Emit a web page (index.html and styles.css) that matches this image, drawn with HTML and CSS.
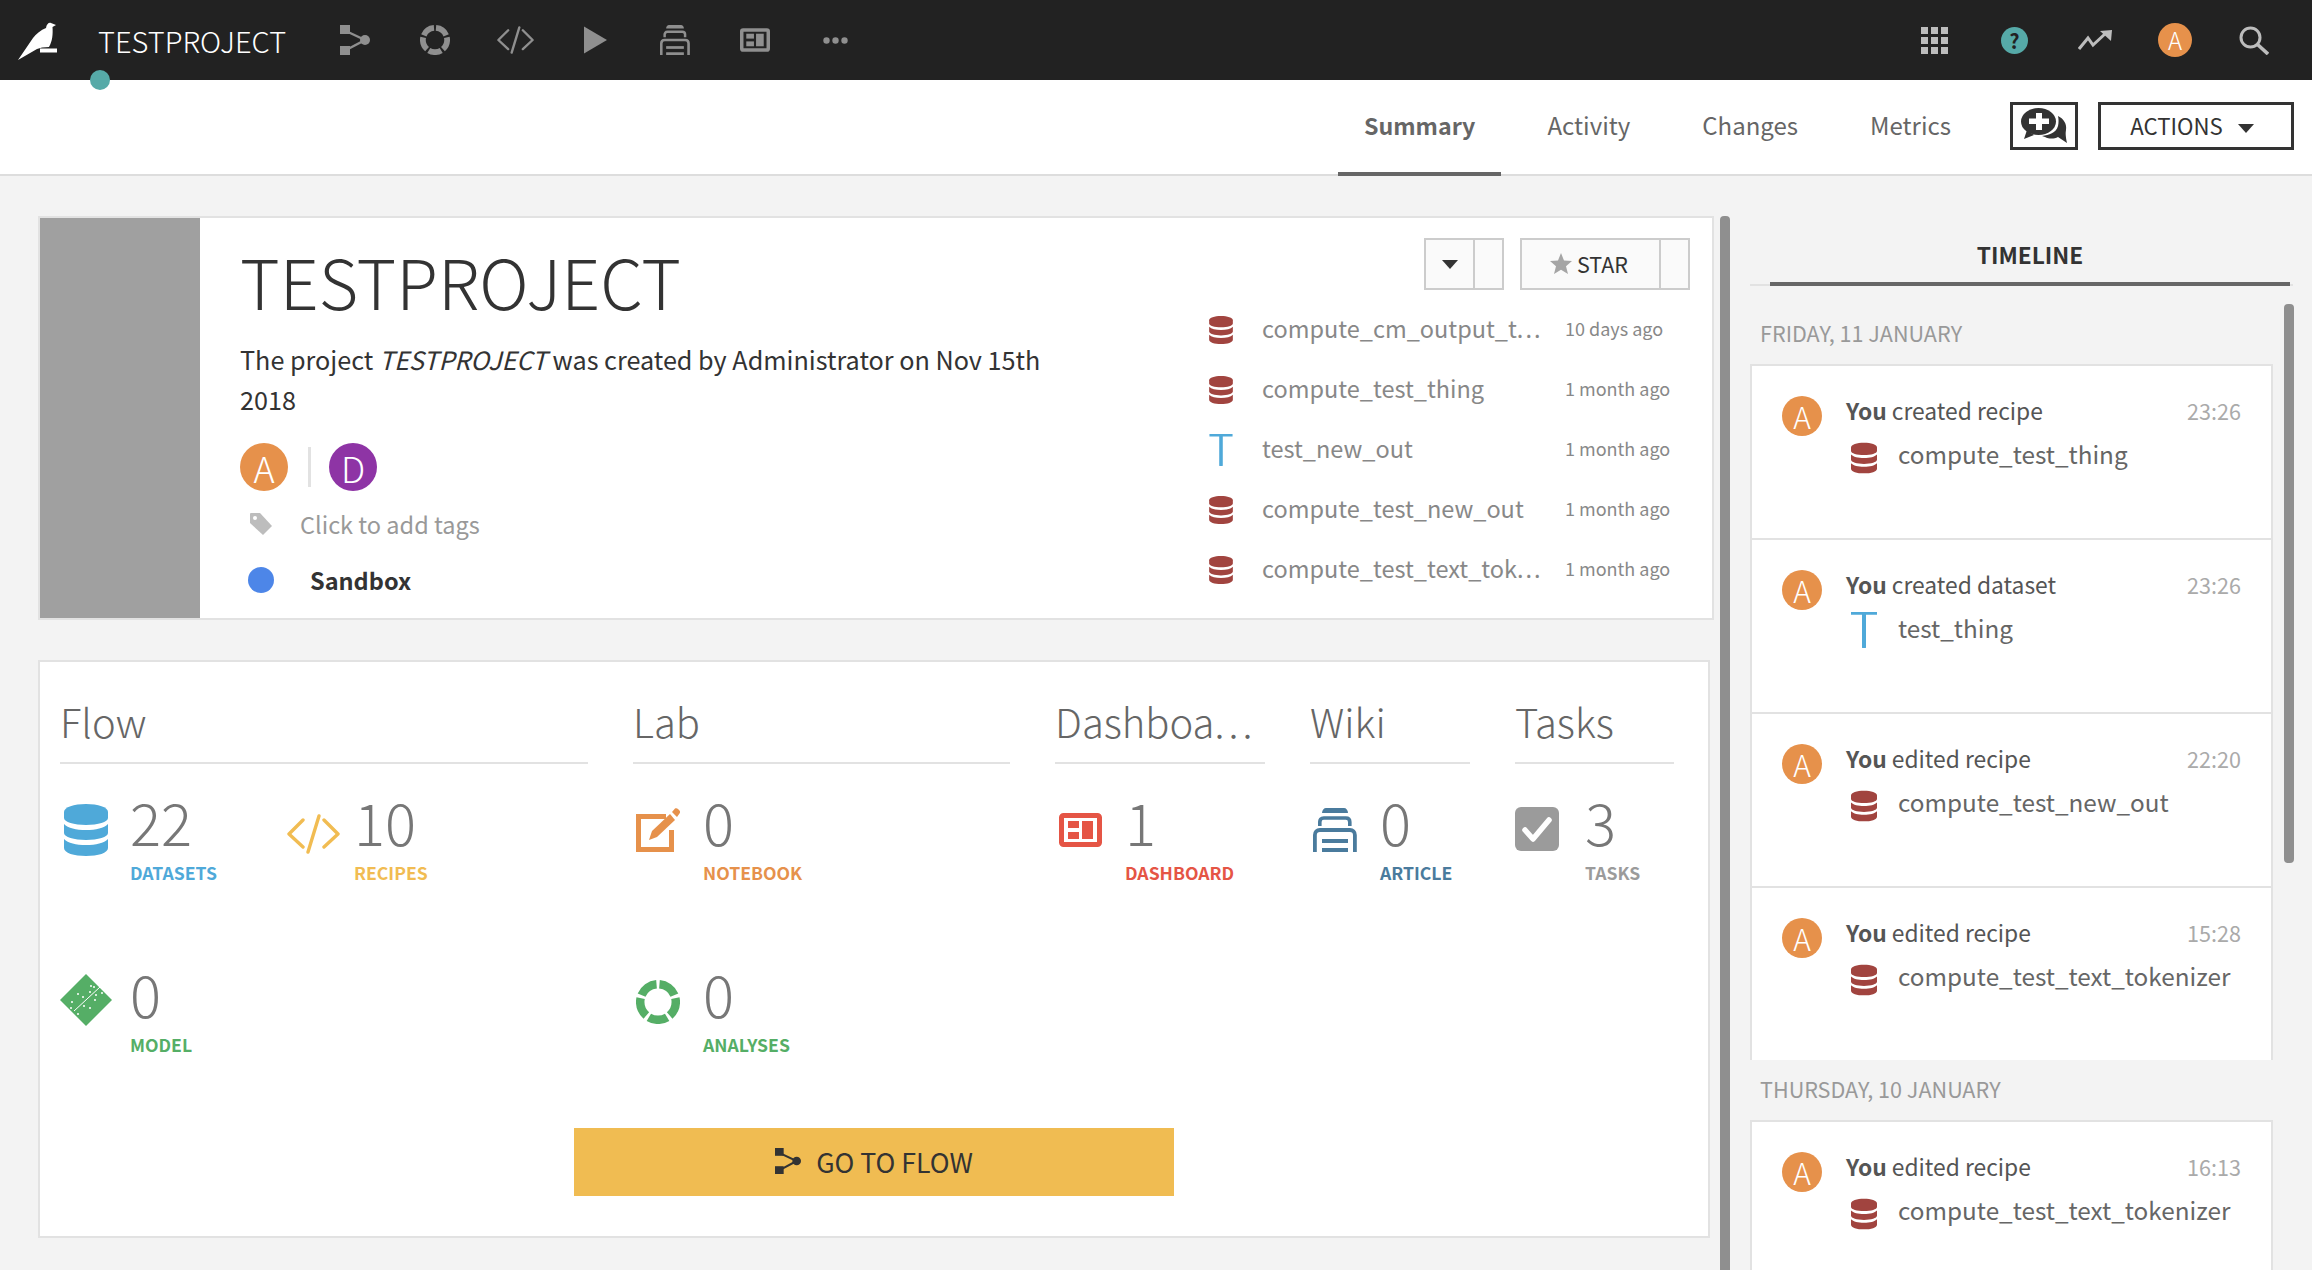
FILE: index.html
```html
<!DOCTYPE html>
<html lang="en">
<head>
    <meta charset="UTF-8">
    <title>TESTPROJECT</title>
    <link rel="stylesheet" href="styles.css">
</head>
<body>
    <svg class="defs" width="0" height="0">
        <symbol id="i-db" viewBox="0 0 44 52">
            <path fill="currentColor" d="M0 8C0 3 10 0 22 0s22 3 22 8v6c0 4-10 7-22 7S0 18 0 14z"/>
            <path fill="currentColor" d="M0 20c4 4 12 6 22 6s18-2 22-6v9c0 4-10 7-22 7S0 33 0 29z"/>
            <path fill="currentColor" d="M0 35c4 4 12 6 22 6s18-2 22-6v9c0 5-10 8-22 8S0 49 0 44z"/>
        </symbol>
        <symbol id="i-t" viewBox="0 0 26 36">
            <path fill="currentColor" d="M0 0h26v2.800H15V35a2 2 0 0 1-4 0V2.800H0z"/>
        </symbol>
        <symbol id="i-flow" viewBox="0 0 30 30">
            <path fill="none" stroke="currentColor" stroke-width="2.4" d="M8 7l17 8L8 24"/>
            <rect fill="currentColor" width="10" height="9"/>
            <rect fill="currentColor" y="21" width="10" height="9"/>
            <circle fill="currentColor" cx="25" cy="15" r="5"/>
        </symbol>
        <symbol id="i-ring" viewBox="0 0 44 44">
            <circle fill="none" stroke="currentColor" stroke-width="8.5" stroke-dasharray="22.5 3.6" stroke-dashoffset="-1.8" transform="rotate(-90 22 22)" cx="22" cy="22" r="17.8" pathLength="130.5"/>
        </symbol>
        <symbol id="i-code" viewBox="0 0 53 40">
            <path fill="none" stroke="currentColor" stroke-width="3.4" stroke-linecap="round" stroke-linejoin="round" d="M16 6L2 20l14 13M37 6l14 14-14 13M32 2L21 38"/>
        </symbol>
        <symbol id="i-wiki" viewBox="0 0 44 44">
            <path fill="currentColor" d="M9 5c0-3 2-5 4-5h18c2 0 4 2 4 5z"/>
            <path fill="none" stroke="currentColor" stroke-width="3.6" d="M6.800 18v-4c0-2 1-4 4-4h22c3 0 4 2 4 4v4"/>
            <path fill="none" stroke="currentColor" stroke-width="3.8" d="M1.900 44V27c0-3 2-5 5-5h30c3 0 5 2 5 5v17"/>
            <rect fill="currentColor" x="9" y="31" width="26" height="4"/>
            <rect fill="currentColor" x="9" y="40" width="26" height="4"/>
        </symbol>
        <symbol id="i-dash" viewBox="0 0 43 34">
            <rect fill="none" stroke="currentColor" stroke-width="5" x="2.500" y="2.500" width="38" height="29" rx="2"/>
            <rect fill="currentColor" x="9" y="8" width="11" height="7"/>
            <rect fill="currentColor" x="9" y="19" width="11" height="7"/>
            <rect fill="currentColor" x="23" y="8" width="11" height="18"/>
        </symbol>
    </svg>

    <header class="topbar">
        <svg class="logo" viewBox="0 0 40 38"><path fill="#fff" d="M0 38L15 16C18 12 23 8 28 6 28.500 2 31 0 33 1L38 3 34.500 5C35 12 34.500 19 31 25L24 25.500 19 27z"/><rect fill="#fff" x="22" y="26.500" width="17" height="4"/></svg>
        <span class="project-name">TESTPROJECT</span>
        <nav class="appnav">
            <svg class="nav-icon wide30"><use href="#i-flow"/></svg>
            <svg class="nav-icon wide30"><use href="#i-ring"/></svg>
            <svg class="nav-icon wide37"><use href="#i-code"/></svg>
            <svg class="nav-icon wide23" viewBox="0 0 23 27"><path fill="currentColor" d="M0 0l23 13.500L0 27z"/></svg>
            <svg class="nav-icon wide30"><use href="#i-wiki"/></svg>
            <svg class="nav-icon wide30"><use href="#i-dash"/></svg>
            <svg class="nav-icon wide25" viewBox="0 0 25 7"><circle fill="currentColor" cx="3.500" cy="3.500" r="3.200"/><circle fill="currentColor" cx="12.500" cy="3.500" r="3.200"/><circle fill="currentColor" cx="21.500" cy="3.500" r="3.200"/></svg>
        </nav>
        <div class="topright">
            <svg class="apps" viewBox="0 0 27 27">
                <g fill="#bdbdbd">
                    <rect width="7" height="7"/><rect x="10" width="7" height="7"/><rect x="20" width="7" height="7"/>
                    <rect y="10" width="7" height="7"/><rect x="10" y="10" width="7" height="7"/><rect x="20" y="10" width="7" height="7"/>
                    <rect y="20" width="7" height="7"/><rect x="10" y="20" width="7" height="7"/><rect x="20" y="20" width="7" height="7"/>
                </g>
            </svg>
            <span class="help">?</span>
            <svg class="trend" viewBox="0 0 34 20"><path fill="none" stroke="#bdbdbd" stroke-width="3" d="M1 19l9-11 5 7 13-12"/><path fill="#bdbdbd" d="M22 1l12-1-1 11z"/></svg>
            <span class="avatar avatar-top">A</span>
            <svg class="search" viewBox="0 0 30 29"><circle fill="none" stroke="#bdbdbd" stroke-width="3" cx="11.500" cy="11.500" r="9.500"/><path stroke="#bdbdbd" stroke-width="3.600" d="M18 18l11 10"/></svg>
        </div>
        <span class="status-dot"></span>
    </header>

    <div class="subnav">
        <a class="tab active">Summary</a>
        <a class="tab">Activity</a>
        <a class="tab">Changes</a>
        <a class="tab">Metrics</a>
        <button class="btn-discuss">
            <svg viewBox="0 0 46 36"><path fill="#333" d="M37 8c6 3 9 8 8 14-.5 3-.5 6 1 13l-9-6c-4 2-9 2-13 0l-3-1c7-1 14-3 16-10 .8-3 .7-7 0-10z"/><ellipse fill="#333" cx="17.500" cy="13.500" rx="17.500" ry="13.500"/><path fill="#333" d="M6 22l7 5-10 4z"/><path fill="#fff" d="M15 5h6v5.500h7V16h-7v6h-6v-6H8v-5.500h7z"/></svg>
        </button>
        <button class="btn-actions">ACTIONS <span class="caret"></span></button>
    </div>

    <main class="page">
        <div class="left">
            <section class="project-card">
                <div class="project-thumb"></div>
                <div class="project-info">
                    <h1>TESTPROJECT</h1>
                    <p class="desc">The project <em>TESTPROJECT</em> was created by Administrator on Nov 15th 2018</p>
                    <div class="people">
                        <span class="avatar avatar-big">A</span>
                        <span class="sep"></span>
                        <span class="avatar avatar-big purple">D</span>
                    </div>
                    <div class="tags">
                        <svg class="tag-icon" viewBox="0 0 22 22"><path fill="#bdbdbd" d="M1 0h9l12 13-9 9L0 10V1a1 1 0 0 1 1-1z"/><circle fill="#fff" cx="5" cy="5" r="2"/></svg>
                        <span>Click to add tags</span>
                    </div>
                    <div class="status-row">
                        <span class="blue-dot"></span>
                        <strong>Sandbox</strong>
                    </div>
                </div>
                <div class="project-side">
                    <div class="project-btns">
                        <div class="btn-group">
                            <span class="cell cell-caret"><span class="caret"></span></span>
                            <span class="cell cell-end"></span>
                        </div>
                        <div class="btn-group">
                            <span class="cell cell-star">
                                <svg viewBox="0 0 22 21"><path fill="#a5a5a5" d="M11 0l3 7.500 8 .5-6 5.200 2 7.800-7-4.300L4 21l2-7.800L0 8l8-.5z"/></svg>
                                STAR
                            </span>
                            <span class="cell cell-end2"></span>
                        </div>
                    </div>
                    <ul class="recent">
                        <li><svg class="obj red"><use href="#i-db"/></svg><span class="obj-name">compute_cm_output_t<span class="dots">...</span></span><span class="ago">10 days ago</span></li>
                        <li><svg class="obj red"><use href="#i-db"/></svg><span class="obj-name">compute_test_thing</span><span class="ago">1 month ago</span></li>
                        <li><svg class="obj blue t-icon"><use href="#i-t"/></svg><span class="obj-name">test_new_out</span><span class="ago">1 month ago</span></li>
                        <li><svg class="obj red"><use href="#i-db"/></svg><span class="obj-name">compute_test_new_out</span><span class="ago">1 month ago</span></li>
                        <li><svg class="obj red"><use href="#i-db"/></svg><span class="obj-name">compute_test_text_tok<span class="dots">...</span></span><span class="ago">1 month ago</span></li>
                    </ul>
                </div>
            </section>

            <section class="stats-card">
                <div class="stats-cols">
                    <div class="col col-flow">
                        <h2>Flow</h2>
                        <div class="stat-grid">
                            <div class="stat stat-datasets">
                                <svg class="stat-icon c-blue db-big"><use href="#i-db"/></svg>
                                <div><div class="num">22</div><div class="lbl c-blue">DATASETS</div></div>
                            </div>
                            <div class="stat stat-recipes">
                                <svg class="stat-icon c-yellow code-big"><use href="#i-code"/></svg>
                                <div><div class="num">10</div><div class="lbl c-yellow">RECIPES</div></div>
                            </div>
                            <div class="stat stat-model">
                                <svg class="stat-icon c-green diamond" viewBox="0 0 52 52">
                                    <path fill="currentColor" d="M26 0l26 26-26 26L0 26z"/>
                                    <path stroke="#fff" stroke-width="1" d="M14 37L40 13"/>
                                    <g fill="#fff"><circle cx="31" cy="12" r="1"/><circle cx="34" cy="13" r="1"/><circle cx="18" cy="20" r="1"/><circle cx="23" cy="23" r="1"/><circle cx="30" cy="18" r="1"/><circle cx="36" cy="21" r="1"/><circle cx="12" cy="28" r="1"/><circle cx="11" cy="34" r="1"/><circle cx="24" cy="32" r="1"/><circle cx="30" cy="34" r="1"/><circle cx="35" cy="26" r="1"/><circle cx="18" cy="40" r="1"/><circle cx="42" cy="19" r="1"/></g>
                                </svg>
                                <div><div class="num">0</div><div class="lbl c-green">MODEL</div></div>
                            </div>
                        </div>
                    </div>
                    <div class="col col-lab">
                        <h2>Lab</h2>
                        <div class="stat-grid single">
                            <div class="stat">
                                <svg class="stat-icon c-orange square44" viewBox="0 0 44 44">
                                    <path fill="none" stroke="currentColor" stroke-width="5" d="M30 8.500H2.500v33h33V22"/>
                                    <path fill="currentColor" d="M13 32l3-9 18-17 5 6-18 17z"/>
                                    <path fill="currentColor" d="M36 4l3-3.500c1-.5 2-.5 3 .5l1.500 1.500c.8 1 .8 2 0 3L41 9z"/>
                                </svg>
                                <div><div class="num">0</div><div class="lbl c-orange">NOTEBOOK</div></div>
                            </div>
                            <div class="stat">
                                <svg class="stat-icon c-green square44"><use href="#i-ring"/></svg>
                                <div><div class="num">0</div><div class="lbl c-green">ANALYSES</div></div>
                            </div>
                        </div>
                    </div>
                    <div class="col col-dash">
                        <h2>Dashboa<span class="h2-dots">...</span></h2>
                        <div class="stat">
                            <svg class="stat-icon c-red dash-big"><use href="#i-dash"/></svg>
                            <div><div class="num">1</div><div class="lbl c-red">DASHBOARD</div></div>
                        </div>
                    </div>
                    <div class="col col-wiki">
                        <h2>Wiki</h2>
                        <div class="stat">
                            <svg class="stat-icon c-steel square44"><use href="#i-wiki"/></svg>
                            <div><div class="num">0</div><div class="lbl c-steel">ARTICLE</div></div>
                        </div>
                    </div>
                    <div class="col col-tasks">
                        <h2>Tasks</h2>
                        <div class="stat">
                            <svg class="stat-icon square44 task-icon" viewBox="0 0 44 44"><rect fill="#9b9b9b" width="44" height="44" rx="6"/><path fill="none" stroke="#fff" stroke-width="5.500" stroke-linecap="round" stroke-linejoin="round" d="M10 23l8 9 16-19"/></svg>
                            <div><div class="num">3</div><div class="lbl c-gray">TASKS</div></div>
                        </div>
                    </div>
                </div>
                <a class="go-flow">
                    <svg class="flow-mini"><use href="#i-flow"/></svg>
                    GO TO FLOW
                </a>
            </section>
        </div>

        <div class="split"></div>

        <aside class="timeline">
            <div class="tl-head"><span>TIMELINE</span></div>
            <div class="tl-scroll"></div>
            <div class="tl-day">FRIDAY, 11 JANUARY</div>
            <div class="tl-card">
                <div class="tl-item">
                    <span class="avatar avatar-tl">A</span>
                    <div class="tl-body">
                        <div class="tl-line"><span><b>You</b> created recipe</span><time>23:26</time></div>
                        <div class="tl-obj"><svg class="obj red"><use href="#i-db"/></svg>compute_test_thing</div>
                    </div>
                </div>
                <div class="tl-item">
                    <span class="avatar avatar-tl">A</span>
                    <div class="tl-body">
                        <div class="tl-line"><span><b>You</b> created dataset</span><time>23:26</time></div>
                        <div class="tl-obj"><svg class="obj blue"><use href="#i-t"/></svg>test_thing</div>
                    </div>
                </div>
                <div class="tl-item">
                    <span class="avatar avatar-tl">A</span>
                    <div class="tl-body">
                        <div class="tl-line"><span><b>You</b> edited recipe</span><time>22:20</time></div>
                        <div class="tl-obj"><svg class="obj red"><use href="#i-db"/></svg>compute_test_new_out</div>
                    </div>
                </div>
                <div class="tl-item">
                    <span class="avatar avatar-tl">A</span>
                    <div class="tl-body">
                        <div class="tl-line"><span><b>You</b> edited recipe</span><time>15:28</time></div>
                        <div class="tl-obj"><svg class="obj red"><use href="#i-db"/></svg>compute_test_text_tokenizer</div>
                    </div>
                </div>
            </div>
            <div class="tl-day">THURSDAY, 10 JANUARY</div>
            <div class="tl-card">
                <div class="tl-item">
                    <span class="avatar avatar-tl">A</span>
                    <div class="tl-body">
                        <div class="tl-line"><span><b>You</b> edited recipe</span><time>16:13</time></div>
                        <div class="tl-obj"><svg class="obj red"><use href="#i-db"/></svg>compute_test_text_tokenizer</div>
                    </div>
                </div>
            </div>
        </aside>
    </main>
</body>
</html>
```

FILE: styles.css
```css
* {
    margin: 0;
    padding: 0;
    box-sizing: border-box;
}

html, body {
    height: 1270px;
    overflow: hidden;
}

body {
    font-family: 'Noto Sans CJK SC', 'Open Sans', sans-serif;
    background: #f3f3f3;
    color: #333;
}

.defs {
    position: absolute;
}

.dots {
    letter-spacing: 2px;
}

.h2-dots {
    letter-spacing: 4px;
}

/* top bar */
.topbar {
    position: relative;
    height: 80px;
    background: #222;
    display: flex;
    align-items: center;
}

.logo {
    width: 40px;
    height: 38px;
    margin-left: 18px;
    margin-top: 2px;
}

.project-name {
    margin-left: 40px;
    width: 242px;
    color: #fff;
    font-size: 29px;
    font-weight: 300;
    line-height: 40px;
}

.appnav {
    display: flex;
    align-items: center;
    color: #8f8f8f;
}

.nav-icon { height: 30px; }
.wide30 { width: 30px; margin-right: 50px; }
.wide37 { width: 37px; margin-right: 50px; margin-left: -3px; }
.wide23 { width: 23px; margin-right: 53px; }
.wide25 { width: 25px; height: 7px; margin-left: 3px; }

.topright {
    margin-left: auto;
    display: flex;
    align-items: center;
    padding-right: 43px;
}

.apps { width: 27px; height: 27px; margin-right: 53px; }
.trend { width: 34px; height: 20px; margin: 0 46px 0 50px; }
.search { width: 30px; height: 29px; margin-left: 47px; }

.help {
    width: 27px;
    height: 27px;
    border-radius: 50%;
    background: #56aaa8;
    color: #222;
    font-size: 20px;
    font-weight: 700;
    line-height: 27px;
    text-align: center;
}

.status-dot {
    position: absolute;
    left: 90px;
    top: 70px;
    width: 20px;
    height: 20px;
    border-radius: 50%;
    background: #56aaa8;
}

.avatar {
    display: inline-block;
    flex: none;
    border-radius: 50%;
    background: #e6914b;
    color: #fff;
    text-align: center;
    font-weight: 300;
}

.avatar-top { width: 34px; height: 34px; font-size: 24px; line-height: 34px; }
.avatar-big { width: 48px; height: 48px; font-size: 36px; line-height: 48px; }
.avatar-tl { width: 40px; height: 40px; font-size: 30px; line-height: 40px; }
.purple { background: #8e34a5; }

/* sub navigation */
.subnav {
    height: 96px;
    background: #fff;
    border-bottom: 2px solid #ddd;
    display: flex;
    align-items: flex-start;
}

.tab {
    height: 96px;
    color: #666;
    font-size: 24px;
    line-height: 90px;
    padding: 0 26px;
    margin-right: 20px;
    border-bottom: 4px solid transparent;
}

.tab:first-child { margin-left: auto; }

.tab.active {
    font-size: 23.200px;
    font-weight: 700;
    border-bottom-color: #666;
}

.btn-discuss, .btn-actions {
    height: 48px;
    margin-top: 22px;
    background: #fff;
    border: 3px solid #333;
    font-family: inherit;
    color: #333;
}

.btn-discuss {
    width: 68px;
    margin-left: 13px;
    display: flex;
    align-items: center;
    justify-content: center;
}

.btn-discuss svg { width: 46px; height: 36px; }

.btn-actions {
    width: 196px;
    margin: 22px 18px 0 20px;
    padding: 0 8px 2px 0;
    font-size: 22.200px;
    font-weight: 400;
}

.caret {
    display: inline-block;
    width: 0;
    height: 0;
    margin-left: 10px;
    vertical-align: middle;
    border-left: 8px solid transparent;
    border-right: 8px solid transparent;
    border-top: 9px solid #333;
}

/* main layout */
.page {
    display: flex;
    height: 1094px;
}

.left {
    width: 1720px;
    padding: 40px 0 0 38px;
    flex: none;
}

.split {
    width: 10px;
    flex: none;
    margin-top: 40px;
    background: #8f8f8f;
    border-radius: 4px 4px 0 0;
}

/* project card */
.project-card {
    width: 1676px;
    height: 404px;
    background: #fff;
    border: 2px solid #e2e2e2;
    display: flex;
}

.project-thumb {
    width: 160px;
    background: #a0a0a0;
    flex: none;
}

.project-info {
    width: 1009px;
    padding: 19px 0 0 40px;
    flex: none;
}

.project-info h1 {
    font-size: 68px;
    font-weight: 300;
    line-height: 88px;
    color: #333;
}

.desc {
    width: 830px;
    margin-top: 14px;
    font-size: 25.200px;
    line-height: 40px;
    color: #333;
}

.people {
    display: flex;
    align-items: center;
    margin-top: 24px;
}

.sep {
    width: 3px;
    height: 40px;
    background: #e2e2e2;
    margin: 0 18px 0 20px;
}

.tags {
    display: flex;
    align-items: center;
    margin-top: 16px;
    color: #999;
    font-size: 23.500px;
    line-height: 34px;
}

.tag-icon {
    width: 22px;
    height: 22px;
    margin: 0 28px 0 10px;
}

.status-row {
    display: flex;
    align-items: center;
    margin-top: 22px;
    font-size: 23.500px;
    line-height: 34px;
}

.blue-dot {
    width: 26px;
    height: 26px;
    border-radius: 50%;
    background: #4d86e8;
    margin: 0 36px 0 8px;
}

.project-side {
    flex: 1;
    padding-top: 20px;
}

.project-btns {
    display: flex;
    justify-content: flex-end;
    padding-right: 22px;
    gap: 16px;
}

.btn-group {
    display: flex;
    height: 52px;
    background: #fafafa;
    border: 2px solid #ccc;
    font-size: 21.500px;
    color: #333;
}

.cell {
    display: flex;
    align-items: center;
    justify-content: center;
}

.cell + .cell { border-left: 2px solid #ccc; }
.cell-caret { width: 47px; }
.cell-caret .caret { margin: 0; }
.cell-end { width: 29px; }
.cell-star { width: 137px; gap: 5px; padding: 0 3px 2px 0; }
.cell-star svg { width: 22px; height: 21px; }
.cell-end2 { width: 29px; }

.recent {
    list-style: none;
    margin-top: 10px;
}

.recent li {
    display: flex;
    align-items: center;
    height: 60px;
}

.obj {
    flex: none;
    width: 24px;
    height: 28px;
}

.t-icon { height: 32px; }
.red { color: #a1443f; }
.blue { color: #4fa9d9; }

.recent .obj-name {
    width: 277px;
    margin: 0 26px 4px 29px;
    color: #888;
    font-size: 23.500px;
    white-space: nowrap;
}

.ago {
    color: #888;
    font-size: 18px;
    margin-bottom: 4px;
    white-space: nowrap;
}

/* stats card */
.stats-card {
    width: 1672px;
    height: 578px;
    margin-top: 40px;
    background: #fff;
    border: 2px solid #e2e2e2;
    padding: 0 20px;
}

.stats-cols {
    display: flex;
    gap: 45px;
    height: 466px;
}

.col-flow { width: 528px; }
.col-lab { width: 377px; }
.col-dash { width: 210px; }
.col-wiki { width: 160px; }
.col-tasks { width: 159px; }

.col h2 {
    height: 102px;
    margin-bottom: 36px;
    padding-top: 31px;
    border-bottom: 2px solid #e2e2e2;
    color: #666;
    font-size: 40px;
    font-weight: 300;
    line-height: 56px;
    white-space: nowrap;
}

.stat-grid {
    display: grid;
    grid-template-columns: 225px 1fr;
    grid-auto-rows: 172px;
}

.stat-grid.single { grid-template-columns: 1fr; }

.stat-model { grid-column: 1; }

.stat {
    display: flex;
    align-items: flex-start;
}

.stat-icon {
    flex: none;
}

.db-big { width: 44px; height: 52px; margin: 4px 22px 0 4px; }
.code-big { width: 53px; height: 40px; margin: 14px 14px 0 2px; }
.diamond { width: 52px; height: 52px; margin: 2px 18px 0 0; }
.square44 { width: 44px; height: 44px; margin: 8px 23px 0 3px; }
.task-icon { margin: 7px 26px 0 0; }
.dash-big { width: 43px; height: 34px; margin: 13px 23px 0 4px; }

.num {
    color: #777;
    font-size: 58px;
    font-weight: 300;
    line-height: 42px;
    margin-bottom: 19px;
}

.lbl {
    font-size: 17.600px;
    font-weight: 700;
    line-height: 24px;
}

.c-blue { color: #4fa9d9; }
.c-yellow { color: #f1bc52; }
.c-green { color: #55ae66; }
.c-orange { color: #e6914b; }
.c-red { color: #e55545; }
.c-steel { color: #4a7b9d; }
.c-gray { color: #9b9b9b; }

.go-flow {
    display: flex;
    align-items: center;
    justify-content: center;
    gap: 15px;
    width: 600px;
    height: 68px;
    margin-left: 514px;
    padding-bottom: 2px;
    background: #f0bc52;
    color: #333;
    font-size: 26.700px;
}

.flow-mini { width: 26px; height: 26px; }

/* timeline */
.timeline {
    position: relative;
    flex: 1;
    padding-left: 20px;
}

.tl-head {
    width: 543px;
    height: 110px;
    margin-bottom: 18px;
    border-bottom: 2px solid #e2e2e2;
    padding: 0 3px 0 20px;
}

.tl-head span {
    display: block;
    height: 110px;
    padding-top: 62px;
    border-bottom: 4px solid #666;
    text-align: center;
    font-size: 22.700px;
    font-weight: 700;
    line-height: 34px;
}

.tl-scroll {
    position: absolute;
    left: 554px;
    top: 128px;
    width: 10px;
    height: 559px;
    background: #8f8f8f;
    border-radius: 4px;
}

.tl-day {
    width: 523px;
    height: 60px;
    padding: 15px 0 0 10px;
    color: #999;
    font-size: 21.600px;
    line-height: 28px;
}

.tl-item + .tl-item { border-top: 2px solid #e2e2e2; }

.tl-card {
    width: 523px;
    background: #fff;
    border: 2px solid #e2e2e2;
    border-bottom: 0;
}

.tl-item {
    display: flex;
    height: 174px;
    padding: 30px 30px 0 30px;
}

.tl-item:first-child { height: 172px; }

.tl-body {
    flex: 1;
    margin-left: 24px;
}

.tl-line {
    display: flex;
    justify-content: space-between;
    margin-top: -1px;
    color: #555;
    font-size: 22.800px;
    line-height: 32px;
}

.tl-line time { color: #aaa; font-size: 21.600px; }

.tl-obj {
    display: flex;
    align-items: center;
    height: 36px;
    margin-top: 8px;
    color: #666;
    font-size: 24.300px;
}

.tl-obj .obj {
    margin: 10px 21px 0 5px;
    width: 26px;
    height: 32px;
}

.tl-obj .blue {
    width: 28px;
    height: 36px;
    margin: 6px 20px 0 4px;
}
```
